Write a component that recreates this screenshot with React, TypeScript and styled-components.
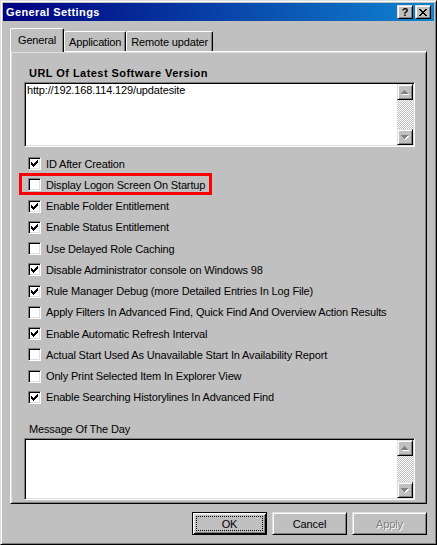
import styled, { createGlobalStyle } from "styled-components";

const GlobalStyle = createGlobalStyle`
  html, body {
    margin: 0;
    padding: 0;
    background: #c0c0c0;
  }
  body {
    font-family: "Liberation Sans", Arial, sans-serif;
    font-size: 11px;
    letter-spacing: -0.15px;
    color: #000;
  }
  * {
    box-sizing: border-box;
  }
`;

const raisedEdge = `
  border: 1px solid;
  border-color: #dfdfdf #000 #000 #dfdfdf;
  box-shadow: inset 1px 1px #fff, inset -1px -1px #808080;
`;

const sunkenEdge = `
  border: 1px solid;
  border-color: #808080 #fff #fff #808080;
  box-shadow: inset 1px 1px #000, inset -1px -1px #dfdfdf;
`;

const Window = styled.div`
  ${raisedEdge}
  width: 437px;
  height: 545px;
  padding: 2px;
  background: #c0c0c0;
  display: flex;
  flex-direction: column;
`;

const TitleBar = styled.div`
  height: 18px;
  display: flex;
  align-items: center;
  justify-content: space-between;
  padding: 0 3px 0 3px;
  background: linear-gradient(to right, #000080, #1084d0);
`;

const Title = styled.span`
  color: #fff;
  font-weight: bold;
  font-size: 11px;
  letter-spacing: 0.4px;
`;

const CaptionButtons = styled.div`
  display: flex;
  gap: 2px;
`;

const CaptionButton = styled.div`
  ${raisedEdge}
  width: 16px;
  height: 14px;
  background: #c0c0c0;
  display: flex;
  align-items: center;
  justify-content: center;
  font-weight: bold;
  font-size: 11px;
  line-height: 10px;
`;

const Body = styled.div`
  flex: 1;
  display: flex;
  flex-direction: column;
  padding: 7px;
`;

const TabStrip = styled.div`
  height: 23px;
  display: flex;
  align-items: flex-end;
`;

const Tab = styled.div<{ $active?: boolean }>`
  position: relative;
  height: ${(p) => (p.$active ? 24 : 20)}px;
  margin-bottom: ${(p) => (p.$active ? -1 : 0)}px;
  padding: ${(p) => (p.$active ? "5px 7px 0" : "4px 4px 0")};
  line-height: 13px;
  background: #c0c0c0;
  border: 1px solid;
  border-color: #fff #000 transparent #fff;
  border-bottom: 0;
  border-radius: 2px 2px 0 0;
  box-shadow: inset -1px 0 #808080;
  z-index: ${(p) => (p.$active ? 1 : 0)};
  white-space: nowrap;
`;

const TabPanel = styled.div`
  flex: 1;
  display: flex;
  flex-direction: column;
  border: 1px solid;
  border-color: #fff #000 #000 #fff;
  box-shadow: inset 1px 1px #dfdfdf, inset -1px -1px #808080;
  padding: 15px 11px 3px 13px;
`;

const FieldLabel = styled.div<{ $bold?: boolean; $gap?: number }>`
  line-height: 13px;
  padding-left: 5px;
  margin-top: ${(p) => p.$gap ?? 0}px;
  font-weight: ${(p) => (p.$bold ? "bold" : "normal")};
  letter-spacing: ${(p) => (p.$bold ? "0.45px" : "-0.15px")};
`;

const Field = styled.div<{ $height?: number }>`
  ${sunkenEdge}
  margin-top: 2px;
  background: #fff;
  display: flex;
  ${(p) => (p.$height ? `height: ${p.$height}px;` : "flex: 1;")}
`;

const FieldText = styled.div`
  flex: 1;
  padding: 1px 2px;
  line-height: 13px;
`;

const ScrollBar = styled.div`
  width: 16px;
  margin: 1px 1px 1px 0;
  display: flex;
  flex-direction: column;
`;

const ArrowButton = styled.div`
  ${raisedEdge}
  width: 16px;
  height: 16px;
  background: #c0c0c0;
  display: flex;
  align-items: center;
  justify-content: center;
`;

const Track = styled.div`
  flex: 1;
  background-image: repeating-conic-gradient(#fff 0% 25%, #c0c0c0 0% 50%);
  background-size: 2px 2px;
`;

const CheckList = styled.div`
  margin-top: 6px;
  padding-left: 4px;
  display: flex;
  flex-direction: column;
`;

const CheckRow = styled.div<{ $marked?: boolean }>`
  position: relative;
  height: 21.25px;
  width: fit-content;
  display: flex;
  align-items: center;
  gap: 5px;
  white-space: nowrap;

  ${(p) =>
    p.$marked &&
    `
    &::after {
      content: "";
      position: absolute;
      left: -9px;
      right: -7px;
      top: -1px;
      bottom: 1px;
      border: 3px solid #ff0000;
      pointer-events: none;
    }
  `}
`;

const CheckBox = styled.div`
  ${sunkenEdge}
  width: 13px;
  height: 13px;
  flex: none;
  background: #fff;
  padding: 1px;
`;

const ButtonRow = styled.div`
  margin-top: 8px;
  display: flex;
  justify-content: flex-end;
  gap: 5px;
`;

const Button = styled.div<{ $default?: boolean; $disabled?: boolean }>`
  width: 75px;
  height: 23px;
  background: #c0c0c0;
  display: flex;
  padding: 3px;
  ${(p) =>
    p.$default
      ? `
    border: 1px solid #000;
    box-shadow: inset 1px 1px #fff, inset -1px -1px #000, inset 2px 2px #dfdfdf, inset -2px -2px #808080;
  `
      : raisedEdge}
  color: ${(p) => (p.$disabled ? "#808080" : "#000")};
  text-shadow: ${(p) => (p.$disabled ? "1px 1px #fff" : "none")};
`;

const ButtonFace = styled.span<{ $focused?: boolean }>`
  flex: 1;
  display: flex;
  align-items: center;
  justify-content: center;
  border: 1px dotted ${(p) => (p.$focused ? "#000" : "transparent")};
`;

const CheckMark = () => (
  <svg width="9" height="9" viewBox="0 0 9 9" shapeRendering="crispEdges" style={{ display: "block" }}>
    <path
      fill="#000"
      d="M1 3h1v3H1z M2 4h1v3H2z M3 5h1v3H3z M4 4h1v3H4z M5 3h1v3H5z M6 2h1v3H6z M7 1h1v3H7z"
    />
  </svg>
);

const CloseGlyph = () => (
  <svg width="8" height="7" viewBox="0 0 8 7" shapeRendering="crispEdges">
    <path
      fill="#000"
      d="M0 0h2v1H0z M6 0h2v1H6z M1 1h2v1H1z M5 1h2v1H5z M2 2h4v1H2z M3 3h2v1H3z M2 4h4v1H2z M1 5h2v1H1z M5 5h2v1H5z M0 6h2v1H0z M6 6h2v1H6z"
    />
  </svg>
);

const upTri = "M3 0h1v1H3z M2 1h3v1H2z M1 2h5v1H1z M0 3h7v1H0z";
const downTri = "M0 0h7v1H0z M1 1h5v1H1z M2 2h3v1H2z M3 3h1v1H3z";

const Arrow = ({ dir }: { dir: "up" | "down" }) => (
  <svg width="8" height="5" viewBox="0 0 8 5" shapeRendering="crispEdges">
    <path fill="#fff" transform="translate(1 1)" d={dir === "up" ? upTri : downTri} />
    <path fill="#808080" d={dir === "up" ? upTri : downTri} />
  </svg>
);

const Scroller = () => (
  <ScrollBar>
    <ArrowButton>
      <Arrow dir="up" />
    </ArrowButton>
    <Track />
    <ArrowButton>
      <Arrow dir="down" />
    </ArrowButton>
  </ScrollBar>
);

const options: { label: string; checked: boolean }[] = [
  { label: "ID After Creation", checked: true },
  { label: "Display Logon Screen On Startup", checked: false },
  { label: "Enable Folder Entitlement", checked: true },
  { label: "Enable Status Entitlement", checked: true },
  { label: "Use Delayed Role Caching", checked: false },
  { label: "Disable Administrator console on Windows 98", checked: true },
  { label: "Rule Manager Debug (more Detailed Entries In Log File)", checked: true },
  { label: "Apply Filters In Advanced Find, Quick Find And Overview Action Results", checked: false },
  { label: "Enable Automatic Refresh Interval", checked: true },
  { label: "Actual Start Used As Unavailable Start In Availability Report", checked: false },
  { label: "Only Print Selected Item In Explorer View", checked: false },
  { label: "Enable Searching Historylines In Advanced Find", checked: true },
];

export default function App() {
  return (
    <>
      <GlobalStyle />
      <Window>
        <TitleBar>
          <Title>General Settings</Title>
          <CaptionButtons>
            <CaptionButton>?</CaptionButton>
            <CaptionButton>
              <CloseGlyph />
            </CaptionButton>
          </CaptionButtons>
        </TitleBar>
        <Body>
          <TabStrip>
            <Tab $active>General</Tab>
            <Tab>Application</Tab>
            <Tab>Remote updater</Tab>
          </TabStrip>
          <TabPanel>
            <FieldLabel $bold>URL Of Latest Software Version</FieldLabel>
            <Field $height={65}>
              <FieldText>http://192.168.114.129/updatesite</FieldText>
              <Scroller />
            </Field>
            <CheckList>
              {options.map((o, i) => (
                <CheckRow key={o.label} $marked={i === 1}>
                  <CheckBox>{o.checked && <CheckMark />}</CheckBox>
                  <span>{o.label}</span>
                </CheckRow>
              ))}
            </CheckList>
            <FieldLabel $gap={15}>Message Of The Day</FieldLabel>
            <Field>
              <FieldText />
              <Scroller />
            </Field>
          </TabPanel>
          <ButtonRow>
            <Button $default>
              <ButtonFace $focused>OK</ButtonFace>
            </Button>
            <Button>
              <ButtonFace>Cancel</ButtonFace>
            </Button>
            <Button $disabled>
              <ButtonFace>Apply</ButtonFace>
            </Button>
          </ButtonRow>
        </Body>
      </Window>
    </>
  );
}
